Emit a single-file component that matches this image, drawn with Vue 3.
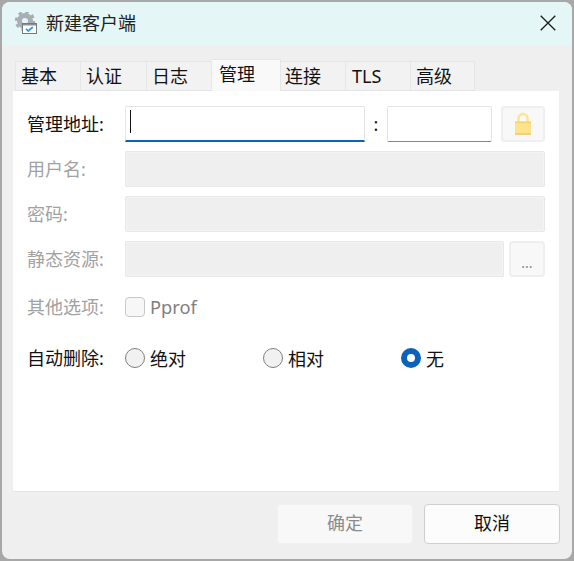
<script setup>
const tabs = [
  { label: '基本', width: 66, pad: 5 },
  { label: '认证', width: 66, pad: 5 },
  { label: '日志', width: 65, pad: 5 },
  { label: '管理', width: 69, pad: 7, active: true },
  { label: '连接', width: 65, pad: 4 },
  { label: 'TLS', width: 65, pad: 6 },
  { label: '高级', width: 64, pad: 5 }
]
</script>

<template>
  <div class="screen">
    <div class="window">
      <header class="titlebar">
        <svg class="app-icon" width="24" height="24" viewBox="0 0 24 24">
          <circle cx="11" cy="9" r="5.5" fill="none" stroke="#a9aeb3" stroke-width="5"/>
          <circle cx="11" cy="9" r="8.6" fill="none" stroke="#a9aeb3" stroke-width="3.2" stroke-dasharray="3.4 3.35"/>
          <rect x="8.5" y="11.5" width="14" height="10" fill="#fff" stroke="#77797c"/>
          <rect x="9" y="12" width="13" height="1.5" fill="#8d8f92"/>
          <path d="M12 16.8l2.3 2.2 4.5-4" fill="none" stroke="#2e9be6" stroke-width="1.7"/>
        </svg>
        <span class="title">新建客户端</span>
        <svg class="close" width="16" height="16" viewBox="0 0 16 16">
          <path d="M.7.7l14.6 14.6M15.3.7L.7 15.3" stroke="#1a1a1a" stroke-width="1.3" fill="none"/>
        </svg>
      </header>

      <div class="content">
        <nav class="tabs">
          <div
            v-for="tab in tabs"
            :key="tab.label"
            class="tab"
            :class="{ active: tab.active }"
            :style="{ width: tab.width + 'px', paddingLeft: tab.pad + 'px' }"
          >{{ tab.label }}</div>
        </nav>

        <section class="panel">
          <div class="row">
            <label class="label">管理地址:</label>
            <div class="input focused"><i class="caret"></i></div>
            <span class="colon">:</span>
            <div class="input port"></div>
            <button class="square lock">
              <svg width="18" height="24" viewBox="0 0 18 24">
                <path d="M4.5 11V6.5a4.5 4.5 0 0 1 9 0V11" fill="none" stroke="#fde68a" stroke-width="2.4"/>
                <rect x="1" y="9.5" width="16" height="13.5" fill="#fde38a"/>
                <rect x="1" y="9.5" width="16" height="1.6" fill="#f6cf78"/>
                <rect x="1" y="21" width="16" height="2" fill="#f6cf78"/>
              </svg>
            </button>
          </div>
          <div class="row">
            <label class="label muted">用户名:</label>
            <div class="input disabled"></div>
          </div>
          <div class="row">
            <label class="label muted">密码:</label>
            <div class="input disabled"></div>
          </div>
          <div class="row row-tight">
            <label class="label muted">静态资源:</label>
            <div class="input disabled"></div>
            <button class="square dots">...</button>
          </div>
          <div class="row row-check">
            <label class="label muted">其他选项:</label>
            <span class="checkbox"></span>
            <span class="check-text">Pprof</span>
          </div>
          <div class="row row-radio">
            <label class="label">自动删除:</label>
            <div class="radio-item"><span class="radio"></span>绝对</div>
            <div class="radio-item"><span class="radio"></span>相对</div>
            <div class="radio-item"><span class="radio on"></span>无</div>
          </div>
        </section>

        <footer class="footer">
          <button class="btn btn-disabled">确定</button>
          <button class="btn">取消</button>
        </footer>
      </div>
    </div>
  </div>
</template>

<style scoped>
.screen {
  width: 574px;
  height: 561px;
  background: #a8a8a8;
  padding: 2px;
  box-sizing: border-box;
  font-family: "Noto Sans", "Noto Sans CJK SC", sans-serif;
  font-size: 18px;
  color: #111;
}
.window {
  height: 557px;
  width: 570px;
  border-radius: 8px;
  overflow: hidden;
  background: #efefef;
  display: flex;
  flex-direction: column;
}
.titlebar {
  height: 43px;
  background: #e4f7f6;
  display: flex;
  align-items: center;
  padding-left: 12px;
  flex: none;
}
.title {
  margin-left: 8px;
  font-size: 18px;
  line-height: 24px;
  color: #222;
  padding-bottom: 2px;
}
.close {
  margin-left: auto;
  margin-right: 16px;
  margin-bottom: 1px;
}
.content {
  flex: 1;
  display: flex;
  flex-direction: column;
  padding: 16px 13px 0 11px;
}
.tabs {
  display: flex;
  height: 30px;
  padding-left: 2px;
  align-items: flex-end;
}
.tab {
  height: 30px;
  box-sizing: border-box;
  background: #f2f2f2;
  border: 1px solid #e6e6e6;
  border-left: none;
  border-bottom: 1px solid #e3e3e3;
  line-height: 28px;
  font-size: 18px;
}
.tab:first-child {
  border-left: 1px solid #e6e6e6;
}
.tab.active {
  height: 32px;
  background: #f9f9f9;
  border: none;
  line-height: 28px;
  border-top: 1px solid #e6e6e6;
  border-right: 1px solid #e6e6e6;
}
.panel {
  height: 401px;
  background: #fff;
  box-sizing: border-box;
  padding: 15px 14px 0 14px;
  border-bottom: 1px solid #e6e6e6;
}
.row {
  display: flex;
  align-items: center;
  height: 36px;
  margin-bottom: 9px;
}
.label {
  width: 98px;
  flex: none;
  font-size: 18px;
  line-height: 24px;
}
.muted {
  color: #a2a2a2;
}
.input {
  flex: 1;
  height: 36px;
  box-sizing: border-box;
  border: 1px solid #e5e5e5;
  background: #fff;
  border-radius: 2px;
  position: relative;
}
.focused {
  flex: none;
  width: 240px;
  border-bottom: 2px solid #0a63b8;
  border-radius: 2px 2px 0 0;
}
.caret {
  position: absolute;
  left: 4px;
  top: 3px;
  width: 1px;
  height: 23px;
  background: #111;
}
.colon {
  width: 22px;
  flex: none;
  text-align: center;
}
.port {
  flex: none;
  width: 105px;
  border-bottom: 1px solid #858585;
}
.disabled {
  background: #efefef;
  border: 2px solid #f4f4f4;
  outline: 1px solid #e8e8e8;
  outline-offset: -1px;
}
.square {
  flex: none;
  width: 44px;
  height: 36px;
  box-sizing: border-box;
  padding: 0;
  border: 2px solid #efefef;
  border-radius: 4px;
  background: #f8f8f8;
  display: flex;
  align-items: center;
  justify-content: center;
}
.lock {
  margin-left: 9px;
}
.dots {
  width: 36px;
  margin-left: 5px;
  font: inherit;
  font-size: 14px;
  color: #7f8a9a;
  padding-top: 6px;
}
.row-check {
  height: 22px;
  margin-top: 19px;
}
.checkbox {
  width: 18px;
  height: 18px;
  border: 1px solid #c8c8c8;
  border-radius: 4px;
  background: #f7f7f7;
  flex: none;
}
.check-text {
  margin-left: 5px;
  font-size: 18.3px;
  color: #7f7f7f;
  padding-bottom: 1px;
}
.row-radio {
  height: 24px;
  margin-top: 28px;
}
.radio-item {
  width: 138px;
  display: flex;
  align-items: center;
  gap: 5px;
  font-size: 18px;
}
.radio {
  width: 20px;
  height: 20px;
  box-sizing: border-box;
  border-radius: 50%;
  background: #f1f1f1;
  border: 1px solid #7f7f7f;
  flex: none;
}
.radio.on {
  background: #fff;
  border: 6px solid #0a63b8;
}
.footer {
  display: flex;
  justify-content: flex-end;
  gap: 11px;
  padding-top: 12px;
  margin-right: -1px;
}
.btn {
  width: 136px;
  height: 40px;
  box-sizing: border-box;
  font: inherit;
  font-size: 18px;
  line-height: 24px;
  padding: 0 0 2px;
  color: #111;
  background: #fcfcfc;
  border: 1px solid #cfcfcf;
  border-radius: 4px;
}
.btn-disabled {
  background: #f8f8f8;
  border-color: #f1f1f1;
  color: #8c8c8c;
}
</style>
